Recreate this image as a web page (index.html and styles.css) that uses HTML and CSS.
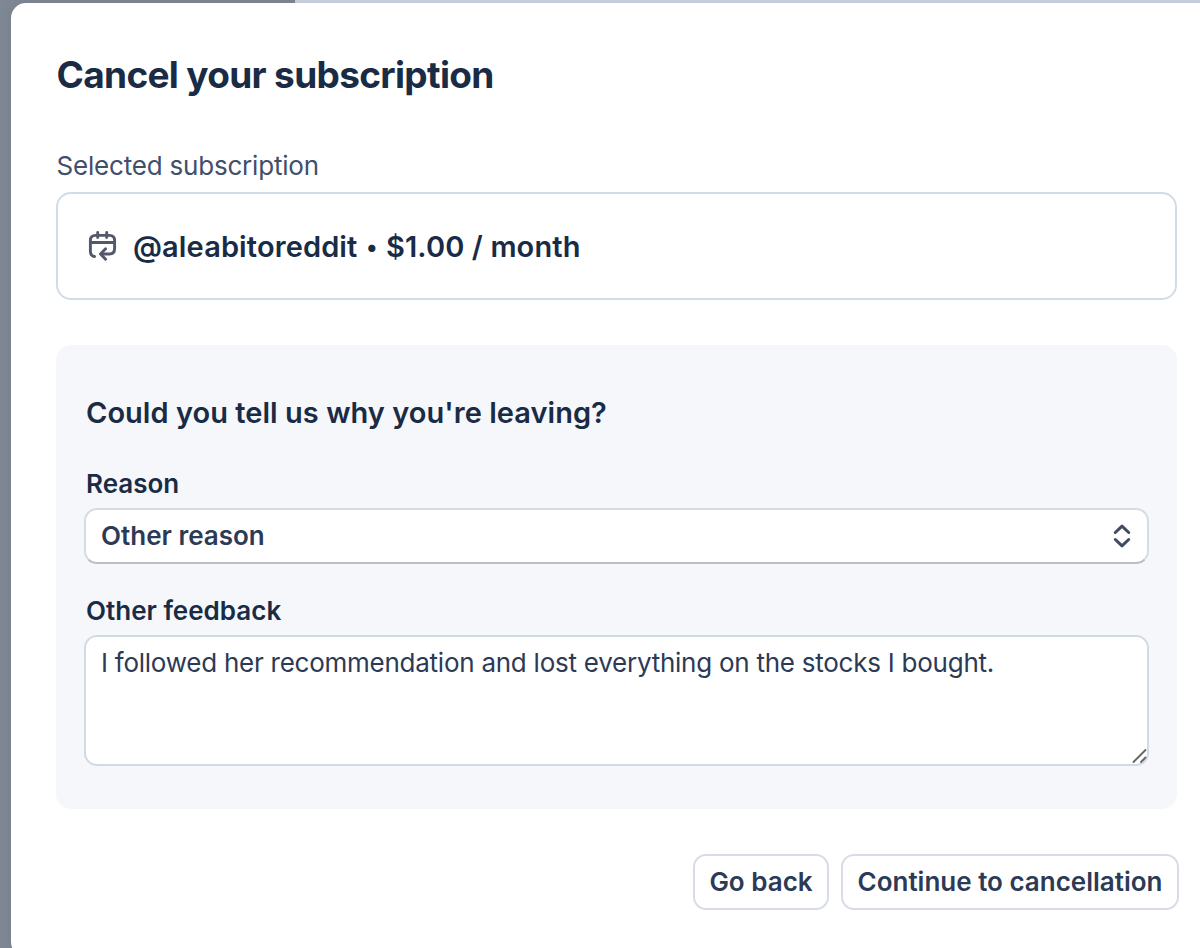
FILE: index.html
```html
<!DOCTYPE html>
<html lang="en">
<head>
  <meta charset="UTF-8" />
  <title>Cancel your subscription</title>
  <link rel="stylesheet" href="styles.css">
</head>
<body>
  <div class="modal">
    <h1>Cancel your subscription</h1>

    <p class="caption">Selected subscription</p>
    <div class="plan">
      <svg class="plan-icon" width="30" height="32" viewBox="0 0 30 32" fill="none" stroke="#545969" stroke-width="2.9" stroke-linecap="round" stroke-linejoin="round">
        <path d="M6.5 26.5C3.7 26 2.4 24.300 2.400 21.500V10.500C2.400 7.200 4.200 5.400 7.500 5.400H21.500C24.800 5.400 26.600 7.200 26.600 10.500V18.500C26.600 22 24.800 24 21.500 24H13.500" />
        <path d="M2.400 12.500H26.600M9.700 2.500V7.500M18.700 2.500V7.500M17.600 18.700L12.500 24L17.600 29.300" />
      </svg>
      <span class="plan-name">@aleabitoreddit <span class="dot">•</span> $1.00 / month</span>
    </div>

    <div class="survey">
      <h2>Could you tell us why you're leaving?</h2>
      <label class="reason-label">Reason</label>
      <button class="select">
        <span>Other reason</span>
        <svg width="20" height="26" viewBox="0 0 20 26" fill="none" stroke="#414b5f" stroke-width="3" stroke-linecap="round" stroke-linejoin="round">
          <path d="M3.300 9.500L10 3.200L16.700 9.500M3.300 16.500L10 22.800L16.700 16.500" />
        </svg>
      </button>
      <label class="feedback-label" for="feedback">Other feedback</label>
      <div class="feedback">
        <textarea id="feedback">I followed her recommendation and lost everything on the stocks I bought.</textarea>
        <svg class="grip" width="16" height="16" viewBox="0 0 16 16" fill="none" stroke="#666" stroke-width="1.900" stroke-linecap="round">
          <path d="M1.500 14L13.500 2M9 14L13.500 9.500" />
        </svg>
      </div>
    </div>

    <div class="actions">
      <button class="btn back">Go back</button>
      <button class="btn continue">Continue to cancellation</button>
    </div>
  </div>
</body>
</html>
```

FILE: styles.css
```css
* {
  box-sizing: border-box;
}
body {
  margin: 0;
  height: 948px;
  padding: 3px 0 0 11px;
  overflow: hidden;
  font-family: Inter, "Liberation Sans", sans-serif;
  color: #1a2b45;
  background: linear-gradient(#cdd6e4, #cdd6e4) 295px 0 / 905px 3px no-repeat, #808895;
}
h1, h2, p {
  margin: 0;
}
.modal {
  width: 1220px;
  height: 954px;
  padding: 47px 54px 0 45px;
  border-radius: 15px;
  background: #fff;
  box-shadow: 0 0 14px rgba(30, 40, 70, 0.12);
}
h1 {
  padding-left: 0.5px;
  font-size: 37px;
  line-height: 50px;
  font-weight: 700;
  letter-spacing: -0.67px;
}
.caption {
  margin-top: 50px;
  padding-left: 0.5px;
  font-size: 26px;
  line-height: 32px;
  letter-spacing: -0.2px;
  color: #414f6b;
}
.plan {
  display: flex;
  align-items: center;
  gap: 15px;
  height: 108px;
  margin-top: 10px;
  padding-left: 30px;
  border: 2px solid #d2dce6;
  border-radius: 15px;
}
.plan-name {
  font-size: 29px;
  font-weight: 600;
  letter-spacing: 0.12px;
}
.dot {
  display: inline-block;
  margin: 0 1px;
  font-size: 23px;
  line-height: 22px;
  vertical-align: 2px;
}
.survey {
  display: flex;
  flex-direction: column;
  height: 464px;
  margin-top: 45px;
  padding: 48px 28px 0;
  border-radius: 15px;
  background: #f5f7fb;
}
h2 {
  padding-left: 2px;
  font-size: 29px;
  line-height: 40px;
  font-weight: 600;
  letter-spacing: 0.03px;
}
label {
  padding-left: 2px;
  font-size: 26px;
  line-height: 32px;
  font-weight: 600;
}
.reason-label {
  margin-top: 35px;
}
.select {
  display: flex;
  align-items: center;
  justify-content: space-between;
  height: 56px;
  margin-top: 8px;
  padding: 0 15px 1px 15px;
  border: 2px solid #d5dbe4;
  border-bottom-color: #b8bec9;
  border-radius: 13px;
  background: #fff;
  color: #2c3a55;
  font: 600 26px Inter, "Liberation Sans", sans-serif;
}
.feedback-label {
  margin-top: 31px;
}
.feedback {
  position: relative;
  height: 131px;
  margin-top: 8px;
}
textarea {
  display: block;
  width: 100%;
  height: 131px;
  padding: 9px 15px;
  border: 2px solid #d0dbe6;
  border-radius: 13px;
  outline: none;
  resize: none;
  background: #fff;
  color: #2c3a55;
  font: 400 26px/33px Inter, "Liberation Sans", sans-serif;
  letter-spacing: -0.25px;
}
.grip {
  position: absolute;
  right: 1px;
  bottom: 2px;
}
.actions {
  display: flex;
  justify-content: flex-end;
  gap: 12px;
  margin-top: 45px;
  margin-right: -2px;
}
.btn {
  height: 56px;
  padding: 0 0 2px;
  border: 2px solid #d7dce6;
  border-radius: 13px;
  background: #fff;
  color: #2c3a55;
  font: 600 26px Inter, "Liberation Sans", sans-serif;
  white-space: nowrap;
}
.back {
  width: 136px;
}
.continue {
  width: 338px;
}
```
